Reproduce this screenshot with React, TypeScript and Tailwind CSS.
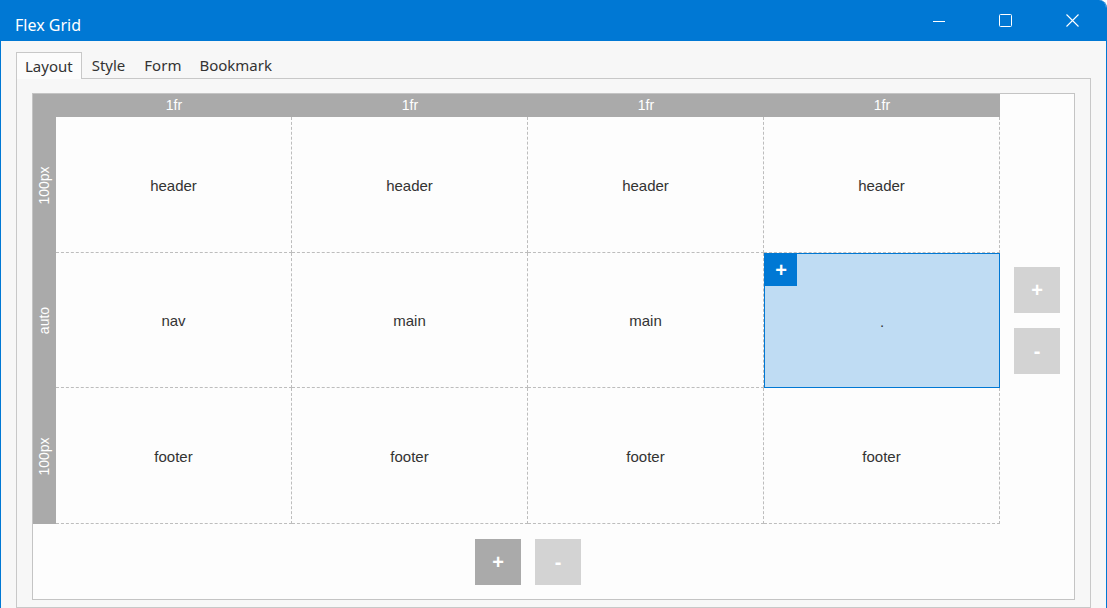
const columns = ["1fr", "1fr", "1fr", "1fr"];
const rows = [
  { size: "100px", cells: ["header", "header", "header", "header"] },
  { size: "auto", cells: ["nav", "main", "main", "."] },
  { size: "100px", cells: ["footer", "footer", "footer", "footer"] },
];

function SideButton({ label, dark }: { label: string; dark?: boolean }) {
  return (
    <button
      className={`flex h-[46px] w-[46px] items-center justify-center text-[20px] font-bold text-white ${
        dark ? "bg-[#aaaaaa]" : "bg-[#d3d3d3]"
      }`}
    >
      {label}
    </button>
  );
}

export default function App() {
  return (
    <div className="flex h-[608px] w-[1107px] flex-col overflow-hidden rounded-tr-[8px] border-x border-[#0078d4] bg-[#f7f7f7] font-['Noto_Sans',sans-serif]">
      {/* Title bar */}
      <div className="flex h-[41px] shrink-0 items-center bg-[#0078d4] text-white">
        <span className="pl-[14px] pt-[8px] text-[16px]">Flex Grid</span>
        <div className="ml-auto flex h-full items-center">
          <div className="flex h-full w-[67px] items-center justify-center">
            <svg width="12" height="12" viewBox="0 0 12 12">
              <path d="M0 6.5h12" stroke="white" strokeWidth="1" />
            </svg>
          </div>
          <div className="flex h-full w-[67px] items-center justify-center">
            <svg width="13" height="13" viewBox="0 0 13 13">
              <rect x="0.5" y="0.5" width="12" height="12" rx="1" fill="none" stroke="white" strokeWidth="1" />
            </svg>
          </div>
          <div className="flex h-full w-[67px] items-center justify-center">
            <svg width="13" height="13" viewBox="0 0 13 13">
              <path d="M0.5 0.5l12 12M12.5 0.5l-12 12" stroke="white" strokeWidth="1.1" />
            </svg>
          </div>
        </div>
      </div>

      {/* Tabs */}
      <div className="flex flex-1 flex-col px-[15px] pt-[11px]">
        <div className="flex h-[26px] items-end text-[15px] text-[#333]">
          <div className="relative -mb-px flex h-[27px] items-center border border-b-0 border-[#c8c8c8] bg-[#fcfcfc] px-[8px]">
            Layout
          </div>
          <div className="ml-[10px] flex h-[26px] items-center">Style</div>
          <div className="ml-[19px] flex h-[26px] items-center">Form</div>
          <div className="ml-[18px] flex h-[26px] items-center">Bookmark</div>
        </div>

        <div className="flex-1 border border-[#c8c8c8] bg-[#f7f7f7] px-[15px] pt-[14px]">
          <div className="border border-[#c4c4c4] bg-[#fdfdfd] font-['Liberation_Sans',Arial,sans-serif]">
            <div className="grid grid-cols-[23px_944px_1fr]">
              {/* column header */}
              <div className="h-[23px] bg-[#aaaaaa]" />
              <div className="grid h-[23px] grid-cols-4 bg-[#aaaaaa] text-[14px] text-white">
                {columns.map((c, i) => (
                  <div key={i} className="flex items-center justify-center">
                    {c}
                  </div>
                ))}
              </div>
              <div />

              {/* row headers */}
              <div className="flex flex-col bg-[#aaaaaa] text-[14px] text-white">
                {rows.map((r, i) => (
                  <div key={i} className={`flex items-center justify-center ${i === 1 ? "h-[135px]" : "h-[136px]"}`}>
                    <span className="-rotate-90 whitespace-nowrap">{r.size}</span>
                  </div>
                ))}
              </div>

              {/* cells */}
              <div className="flex flex-col text-[15px] text-[#333]">
                {rows.map((r, i) => (
                  <div key={i} className={`grid grid-cols-4 ${i === 1 ? "h-[135px]" : "h-[136px]"}`}>
                    {r.cells.map((cell, j) =>
                      i === 1 && j === 3 ? (
                        <div key={j} className="relative flex items-center justify-center border border-[#0078d4] bg-[#bfdcf3]">
                          <div className="absolute left-0 top-0 flex h-[32px] w-[32px] items-center justify-center bg-[#0078d4] text-[20px] font-bold text-white">
                            +
                          </div>
                          <span className="pt-[4px] text-[#333]">{cell}</span>
                        </div>
                      ) : (
                        <div
                          key={j}
                          className="flex items-center justify-center border-b border-r border-dashed border-[#bdbdbd] pt-[3px]"
                        >
                          {cell}
                        </div>
                      )
                    )}
                  </div>
                ))}
              </div>

              {/* row buttons */}
              <div className="flex flex-col items-center justify-center gap-[15px]">
                <SideButton label="+" />
                <SideButton label="-" />
              </div>
            </div>

            {/* column buttons */}
            <div className="grid grid-cols-[23px_944px_1fr] pb-[14px] pt-[15px]">
              <div />
              <div className="flex justify-center gap-[14px]">
                <SideButton label="+" dark />
                <SideButton label="-" />
              </div>
              <div />
            </div>
          </div>
        </div>
      </div>
    </div>
  );
}
